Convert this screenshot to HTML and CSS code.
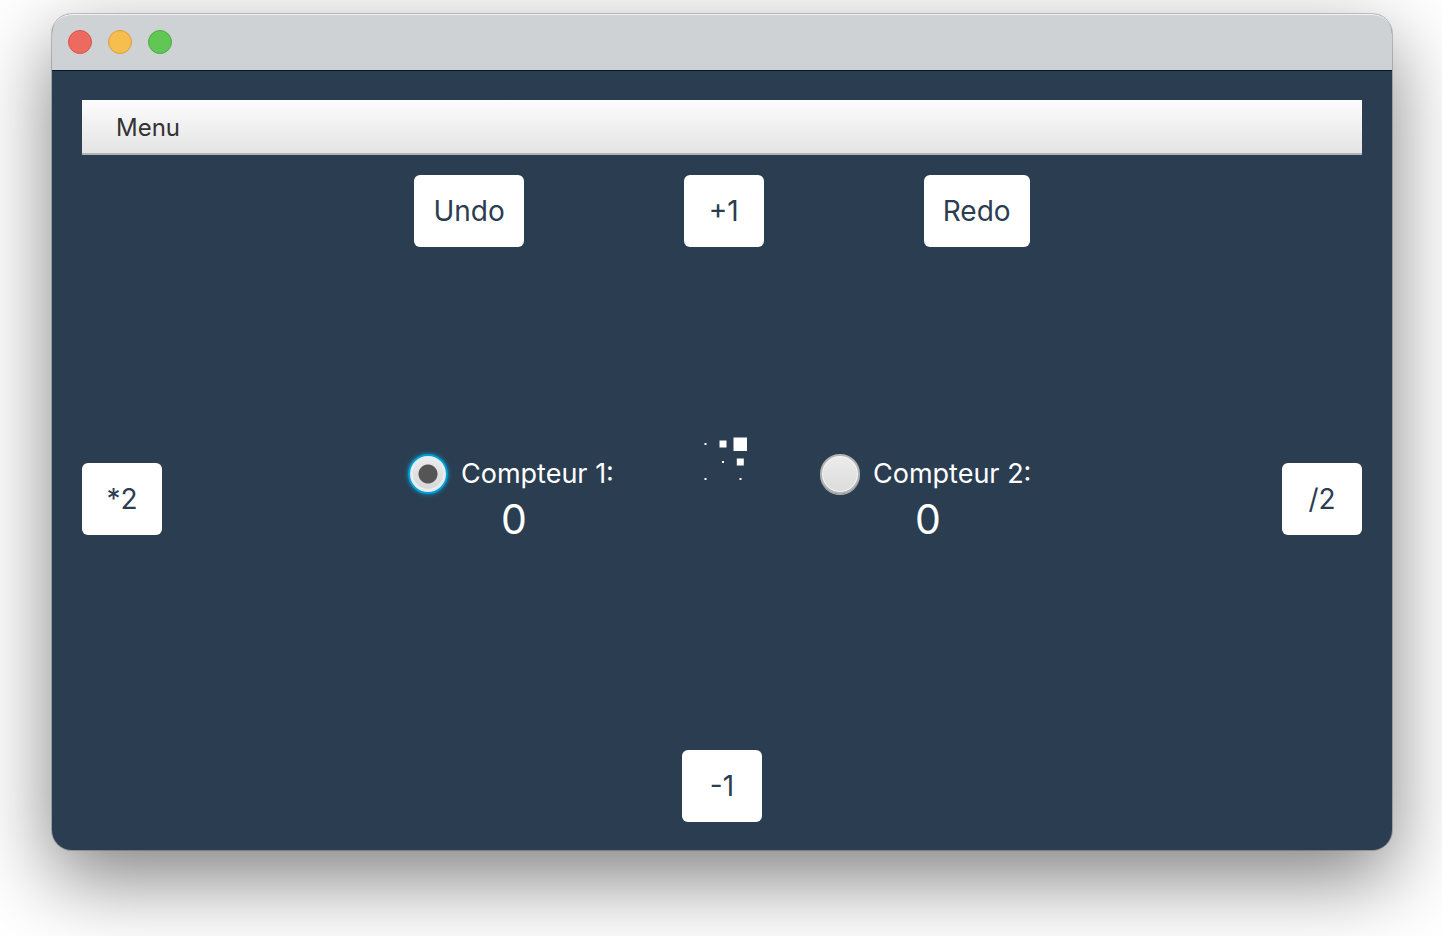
FILE: index.html
```html
<!DOCTYPE html>
<html lang="fr">
<head>
<meta charset="utf-8">
<meta name="viewport" content="width=device-width, initial-scale=1">
<title>Compteur</title>
<link rel="stylesheet" href="styles.css">
</head>
<body>
<div class="window">
  <header class="titlebar">
    <button class="light light-close" type="button" aria-label="Fermer"></button>
    <button class="light light-minimize" type="button" aria-label="Réduire"></button>
    <button class="light light-zoom" type="button" aria-label="Agrandir"></button>
  </header>
  <main class="content">
    <nav class="menubar">
      <button class="menu-item" type="button">Menu</button>
    </nav>
    <div class="toolbar">
      <button class="action" type="button">Undo</button>
      <button class="action" type="button">+1</button>
      <button class="action" type="button">Redo</button>
    </div>
    <div class="middle">
      <button class="action" type="button">*2</button>
      <div class="counters">
        <div class="counter">
          <label class="choice"><input class="radio" type="radio" name="counter" checked>Compteur 1:</label>
          <output class="value">0</output>
        </div>
        <svg class="spinner" viewBox="0 0 54 54" fill="#fff" aria-hidden="true">
          <rect x="11.5" y="8" width="2" height="2"/>
          <rect x="26.5" y="5.5" width="7" height="7"/>
          <rect x="40.5" y="2.5" width="13.5" height="13.5"/>
          <rect x="29" y="26" width="2" height="2"/>
          <rect x="43.8" y="23.5" width="7" height="7"/>
          <rect x="11.5" y="43" width="2" height="2"/>
          <rect x="46.5" y="43" width="2" height="2"/>
        </svg>
        <div class="counter counter-wide">
          <label class="choice"><input class="radio" type="radio" name="counter">Compteur 2:</label>
          <output class="value">0</output>
        </div>
      </div>
      <button class="action" type="button">/2</button>
    </div>
    <div class="toolbar">
      <button class="action" type="button">-1</button>
    </div>
  </main>
</div>
</body>
</html>
```
FILE: styles.css
```css
* { box-sizing: border-box; }

body {
  margin: 0;
  min-height: 100vh;
  display: flex;
  padding: 14px 50px 86px 52px;
  background: #fff;
  font-family: Inter, "Liberation Sans", sans-serif;
  overflow: hidden;
}

button { font-family: inherit; border: 0; margin: 0; }

.window {
  flex: 1;
  display: flex;
  flex-direction: column;
  border-radius: 20px;
  background: #2b3d51;
  box-shadow: 0 0 0 1px rgba(0, 0, 0, .2), 0 28px 80px rgba(0, 0, 0, .5);
}

.titlebar {
  display: flex;
  align-items: center;
  gap: 16px;
  height: 57px;
  padding: 0 16px;
  background: #ced2d5;
  border-bottom: 1px solid #04172a;
  border-radius: 20px 20px 0 0;
  box-shadow: inset 0 2px 0 -1px #f2f3f4;
}

.light {
  width: 24px;
  height: 24px;
  padding: 0;
  border-radius: 50%;
  border: 1px solid;
}
.light-close { background: #ed6a5f; border-color: #d6534a; }
.light-minimize { background: #f5be4f; border-color: #d9a03b; }
.light-zoom { background: #62c655; border-color: #50a942; }

.content {
  flex: 1;
  display: flex;
  flex-direction: column;
  padding: 29px 30px 28px;
}

.menubar {
  display: flex;
  height: 55px;
  margin-bottom: 20px;
  padding: 0 18px;
  background: linear-gradient(#fcfcfc, #e4e4e4);
  border-bottom: 2px solid #b3b3b3;
}

.menu-item {
  padding: 2px 16px 0;
  background: none;
  color: #333;
  font-size: 24px;
}

.toolbar {
  display: flex;
  justify-content: center;
  gap: 160px;
}

.action {
  min-width: 80px;
  height: 72px;
  padding: 0 19px;
  border-radius: 6px;
  background: #fff;
  color: #2b3d51;
  font-size: 28px;
}

.middle {
  flex: 1;
  display: flex;
  align-items: center;
  justify-content: space-between;
}

.counters {
  display: flex;
  gap: 73px;
  height: 128px;
  color: #fff;
}

.counter {
  display: flex;
  flex-direction: column;
  width: 212px;
  padding-top: 16px;
}

.counter-wide { width: 216px; }

.choice {
  display: flex;
  align-items: center;
  gap: 13px;
  height: 46px;
  font-size: 27px;
  white-space: nowrap;
}

.radio {
  appearance: none;
  flex: none;
  width: 40px;
  height: 40px;
  margin: 0;
  border: 2px solid #b4b4b4;
  border-radius: 50%;
  background: linear-gradient(#ececec, #dcdcdc);
  box-shadow: inset 0 0 0 1px #f6f6f6, 0 1px 0 #b4b4b4;
}

.radio:checked {
  border: 2px solid #039ed3;
  background: radial-gradient(circle, #555 0 9px, transparent 10px), linear-gradient(#ececec, #d6d6d6);
  box-shadow: inset 0 0 0 3px #e6edf0, 0 0 4px #039ed3;
}

.value {
  font-size: 41px;
  line-height: 44px;
  text-align: center;
}

.spinner { width: 54px; height: 54px; }
```
